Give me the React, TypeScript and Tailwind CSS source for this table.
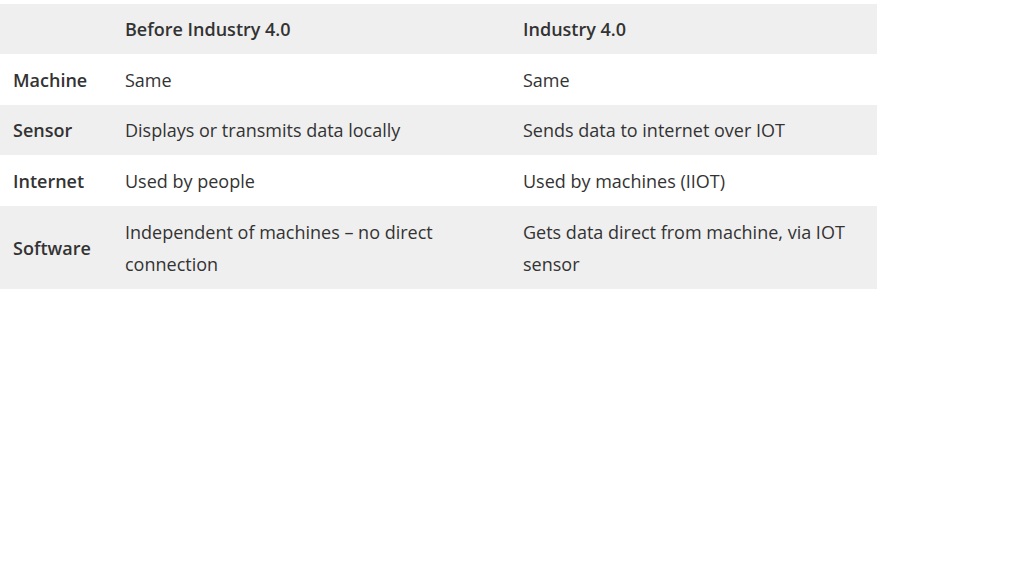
import React from "react";

const rows: [string, string, string, string][] = [
  ["Machine", "Same", "Same", "h-[51px]"],
  ["Sensor", "Displays or transmits data locally", "Sends data to internet over IOT", "h-[50px]"],
  ["Internet", "Used by people", "Used by machines (IIOT)", "h-[51px]"],
  ["Software", "Independent of machines – no direct connection", "Gets data direct from machine, via IOT sensor", "h-[83px]"],
];

export default function App() {
  return (
    <div className="w-[1024px] h-[576px] bg-white pt-[4px]" style={{ fontFamily: "'Open Sans', sans-serif" }}>
      <table className="w-[877px] border-collapse table-fixed text-[18px] leading-[32px] text-[#333]">
        <colgroup>
          <col className="w-[112px]" />
          <col className="w-[398px]" />
          <col className="w-[367px]" />
        </colgroup>
        <thead>
          <tr className="bg-[#efefef] h-[50px]">
            <th className="px-[13px] py-[9px] text-left font-semibold"></th>
            <th className="px-[13px] py-[9px] text-left font-semibold">Before Industry 4.0</th>
            <th className="px-[13px] py-[9px] text-left font-semibold">Industry 4.0</th>
          </tr>
        </thead>
        <tbody>
          {rows.map((r, i) => (
            <tr key={r[0]} className={`${i % 2 === 1 ? "bg-[#efefef]" : "bg-white"} ${r[3]}`}>
              <td className="px-[13px] py-[9px] align-middle font-semibold">{r[0]}</td>
              <td className="px-[13px] py-[9px] align-middle">{r[1]}</td>
              <td className="px-[13px] py-[9px] align-middle">{r[2]}</td>
            </tr>
          ))}
        </tbody>
      </table>
    </div>
  );
}
